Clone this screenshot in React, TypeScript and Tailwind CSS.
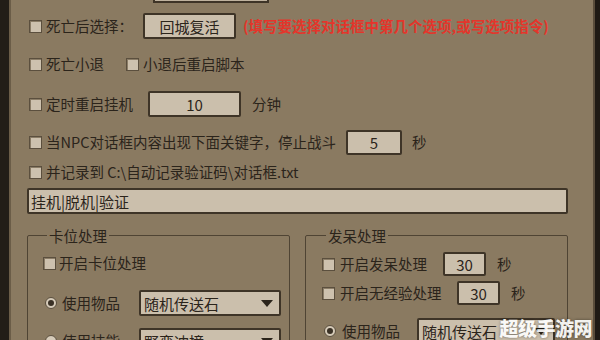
const font = { fontFamily: '"Noto Sans CJK SC", "Noto Sans", sans-serif' };

function Check() {
    return <span className="w-[13px] h-[13px] shrink-0 bg-[#cdc1ae] border border-[#5b4f3e] shadow-[inset_1px_1px_0_#8a7c66]" />;
}

function Radio({ on }: { on?: boolean }) {
    return (
        <span className="w-[12px] h-[12px] shrink-0 rounded-full bg-[#d6cbb9] border border-[#5b4f3e] flex items-center justify-center">
            {on && <span className="w-[6px] h-[6px] rounded-full bg-[#3a3126]" />}
        </span>
    );
}

function Box({ text, className }: { text: string; className: string }) {
    return (
        <div className={`bg-[#cbbfac] border-2 border-[#3e3427] rounded-[2px] flex items-center justify-center text-[15px] text-[#2b241b] ${className}`}>
            {text}
        </div>
    );
}

function Select({ text, className }: { text: string; className: string }) {
    return (
        <div className={`bg-[#cbbfac] border-2 border-[#3e3427] rounded-[2px] flex items-center justify-between pl-[3px] pr-[6px] text-[15px] text-[#2b241b] ${className}`}>
            <span>{text}</span>
            <span className="w-0 h-0 border-x-[6px] border-x-transparent border-t-[7px] border-t-[#2b241b]" />
        </div>
    );
}

export default function App() {
    return (
        <div className="w-[600px] h-[340px] flex bg-[#1d1914] overflow-hidden relative" style={font}>
            <div className="w-[9px] shrink-0 bg-[#221d17]" />
            <div className="w-[532px] flex-1 bg-[#8a7a61] border-l-2 border-[#6b5d48] border-r-2 border-r-[#5a4d3b] pl-[18px] text-[#2b241b] text-[14.5px] leading-none">
                <div className="ml-[124px] w-[116px] h-[3px] bg-[#c0b39f] border-2 border-t-0 border-[#3e3427]" />

                <div className="mt-[9px] h-[28px] flex items-center">
                    <Check />
                    <span className="ml-[4px] w-[97px]">死亡后选择：</span>
                    <Box text="回城复活" className="w-[93px] h-[26px]" />
                    <span className="ml-[7px] text-[#e4352b] font-bold text-[14.5px]">(填写要选择对话框中第几个选项,或写选项指令)</span>
                </div>

                <div className="mt-[12px] h-[24px] flex items-center">
                    <Check />
                    <span className="ml-[4px] w-[80px]">死亡小退</span>
                    <Check />
                    <span className="ml-[4px]">小退后重启脚本</span>
                </div>

                <div className="mt-[14px] h-[28px] flex items-center">
                    <Check />
                    <span className="ml-[4px] w-[102px]">定时重启挂机</span>
                    <Box text="10" className="w-[93px] h-[26px]" />
                    <span className="ml-[11px]">分钟</span>
                </div>

                <div className="mt-[11px] h-[26px] flex items-center">
                    <Check />
                    <span className="ml-[4px] w-[300px]">当NPC对话框内容出现下面关键字，停止战斗</span>
                    <Box text="5" className="w-[56px] h-[25px]" />
                    <span className="ml-[10px]">秒</span>
                </div>

                <div className="mt-[7px] h-[20px] flex items-center">
                    <Check />
                    <span className="ml-[4px]">并记录到 C:\自动记录验证码\对话框.txt</span>
                </div>

                <div className="mt-[6px] -ml-[2px] w-[541px] h-[26px] bg-[#cbbfac] border-2 border-[#3e3427] rounded-[2px] flex items-center pl-[2px] text-[15px]">
                    挂机|脱机|验证
                </div>

                <div className="mt-[14px] -ml-[2px] flex gap-[15px]">
                    <fieldset className="w-[263px] h-[140px] border border-[#4f4434] rounded-[2px] pl-[15px]">
                        <legend className="ml-[4px] px-[2px] text-[14.5px] leading-[15px]">卡位处理</legend>
                        <div className="mt-[10px] h-[20px] flex items-center">
                            <Check />
                            <span className="ml-[3px]">开启卡位处理</span>
                        </div>
                        <div className="mt-[17px] h-[26px] flex items-center">
                            <span className="ml-[2px]"><Radio on /></span>
                            <span className="ml-[5px] w-[77px]">使用物品</span>
                            <Select text="随机传送石" className="w-[142px] h-[26px]" />
                        </div>
                        <div className="mt-[12px] h-[26px] flex items-center">
                            <span className="ml-[2px]"><Radio /></span>
                            <span className="ml-[5px] w-[77px]">使用技能</span>
                            <Select text="野蛮冲撞" className="w-[142px] h-[26px]" />
                        </div>
                    </fieldset>

                    <fieldset className="w-[263px] h-[140px] border border-[#4f4434] rounded-[2px] pl-[16px]">
                        <legend className="ml-[4px] px-[2px] text-[14.5px] leading-[15px]">发呆处理</legend>
                        <div className="mt-[9px] h-[24px] flex items-center">
                            <Check />
                            <span className="ml-[5px] w-[103px]">开启发呆处理</span>
                            <Box text="30" className="w-[43px] h-[24px]" />
                            <span className="ml-[11px]">秒</span>
                        </div>
                        <div className="mt-[5px] h-[24px] flex items-center">
                            <Check />
                            <span className="ml-[5px] w-[117px]">开启无经验处理</span>
                            <Box text="30" className="w-[43px] h-[24px]" />
                            <span className="ml-[11px]">秒</span>
                        </div>
                        <div className="mt-[13px] h-[26px] flex items-center">
                            <span className="ml-[2px]"><Radio on /></span>
                            <span className="ml-[6px] w-[75px]">使用物品</span>
                            <Select text="随机传送石" className="w-[138px] h-[26px]" />
                        </div>
                    </fieldset>
                </div>
            </div>
            <div className="w-[5px] shrink-0 bg-[#1f1a14]" />

            <div className="absolute right-[8px] bottom-[-2px] text-white font-black text-[19px] tracking-[-0.5px] [text-shadow:0_0_3px_rgba(0,0,0,0.5)] opacity-90">
                超级手游网
            </div>
        </div>
    );
}
